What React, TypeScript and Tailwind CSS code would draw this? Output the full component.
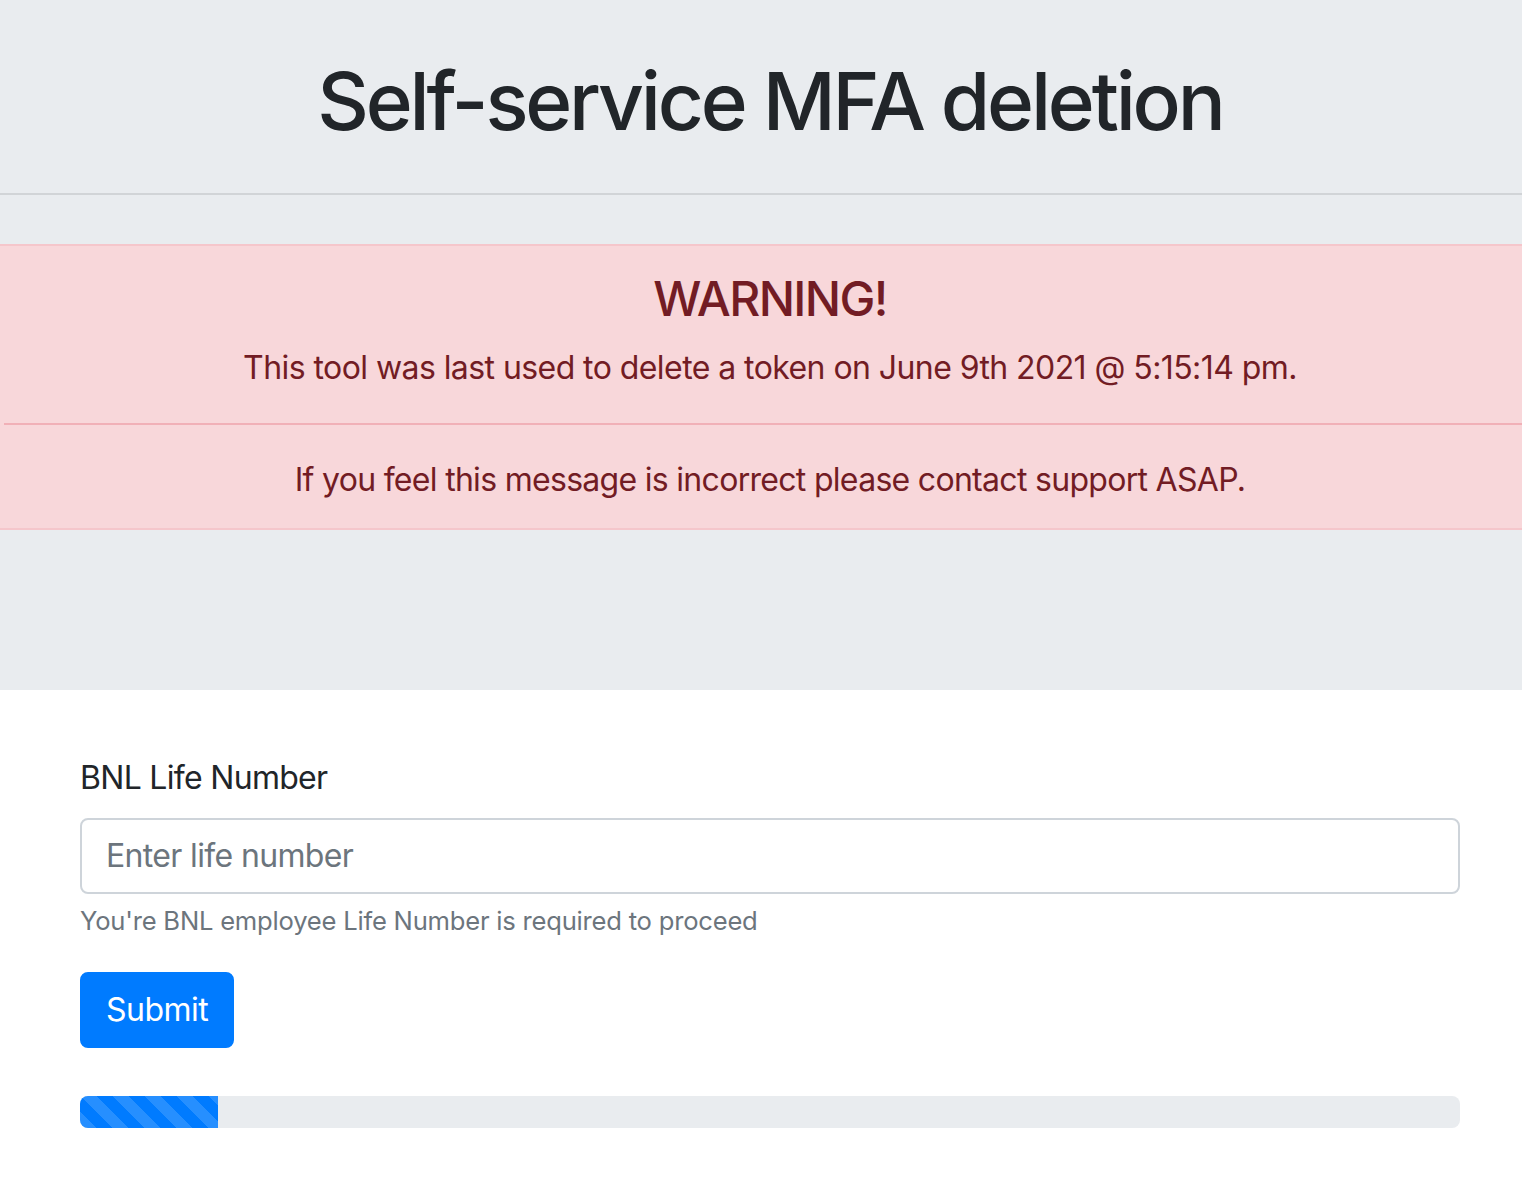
export default function App() {
  return (
    <div className="w-[1522px] min-h-[1186px] overflow-hidden bg-white font-['Inter','Liberation_Sans',sans-serif]">
      <div className="w-[1540px]">
        <div className="bg-[#e9ecef] pt-[53px] pb-[160px]">
          <h1 className="text-center text-[80px] leading-[96px] font-medium tracking-[-3.2px] text-[#212529]">
            Self-service MFA deletion
          </h1>
          <hr className="mt-[44px] mb-[49px] border-0 border-t-2 border-[#d1d4d7]" />
          <div className="border-y-2 border-[#f5c6cb] bg-[#f8d7da] py-[24px] text-center text-[#721c24]">
            <h4 className="text-[48px] leading-[57.6px] font-medium tracking-[-1.6px] mb-[16px]">WARNING!</h4>
            <p className="text-[32px] leading-[48px] tracking-[-0.57px]">
              This tool was last used to delete a token on June 9th 2021 @ 5:15:14 pm.
            </p>
            <hr className="my-[31px] ml-[4px] border-0 border-t-2 border-[#f1b0b7]" />
            <p className="text-[32px] leading-[48px] tracking-[-0.7px]">
              If you feel this message is incorrect please contact support ASAP.
            </p>
          </div>
        </div>

        <form className="mx-[80px] pt-[64px]" onSubmit={(e) => e.preventDefault()}>
          <div className="mb-[32px]">
            <label className="block mb-[16px] text-[32px] leading-[48px] tracking-[-0.7px] text-[#212529]">
              BNL Life Number
            </label>
            <input
              type="text"
              placeholder="Enter life number"
              className="block w-full h-[76px] px-[24px] py-[12px] text-[32px] leading-[48px] tracking-[-0.65px] text-[#495057] border-2 border-[#ced4da] rounded-[8px] bg-white placeholder:text-[#6c757d] outline-none"
            />
            <small className="block mt-[8px] text-[25.6px] leading-[38.4px] tracking-[-0.22px] text-[#6c757d]">
              You're BNL employee Life Number is required to proceed
            </small>
          </div>
          <button
            type="submit"
            className="h-[76px] px-[24px] text-[32px] leading-[48px] tracking-[-0.5px] text-white bg-[#007bff] border-2 border-[#007bff] rounded-[8px]"
          >
            Submit
          </button>
          <div className="mt-[48px] flex h-[32px] overflow-hidden rounded-[8px] bg-[#e9ecef]">
            <div className="w-[10%] h-full bg-[#007bff] bg-[linear-gradient(45deg,rgba(255,255,255,.15)_25%,transparent_25%,transparent_50%,rgba(255,255,255,.15)_50%,rgba(255,255,255,.15)_75%,transparent_75%,transparent)] bg-[length:32px_32px]" />
          </div>
        </form>
      </div>
    </div>
  );
}
